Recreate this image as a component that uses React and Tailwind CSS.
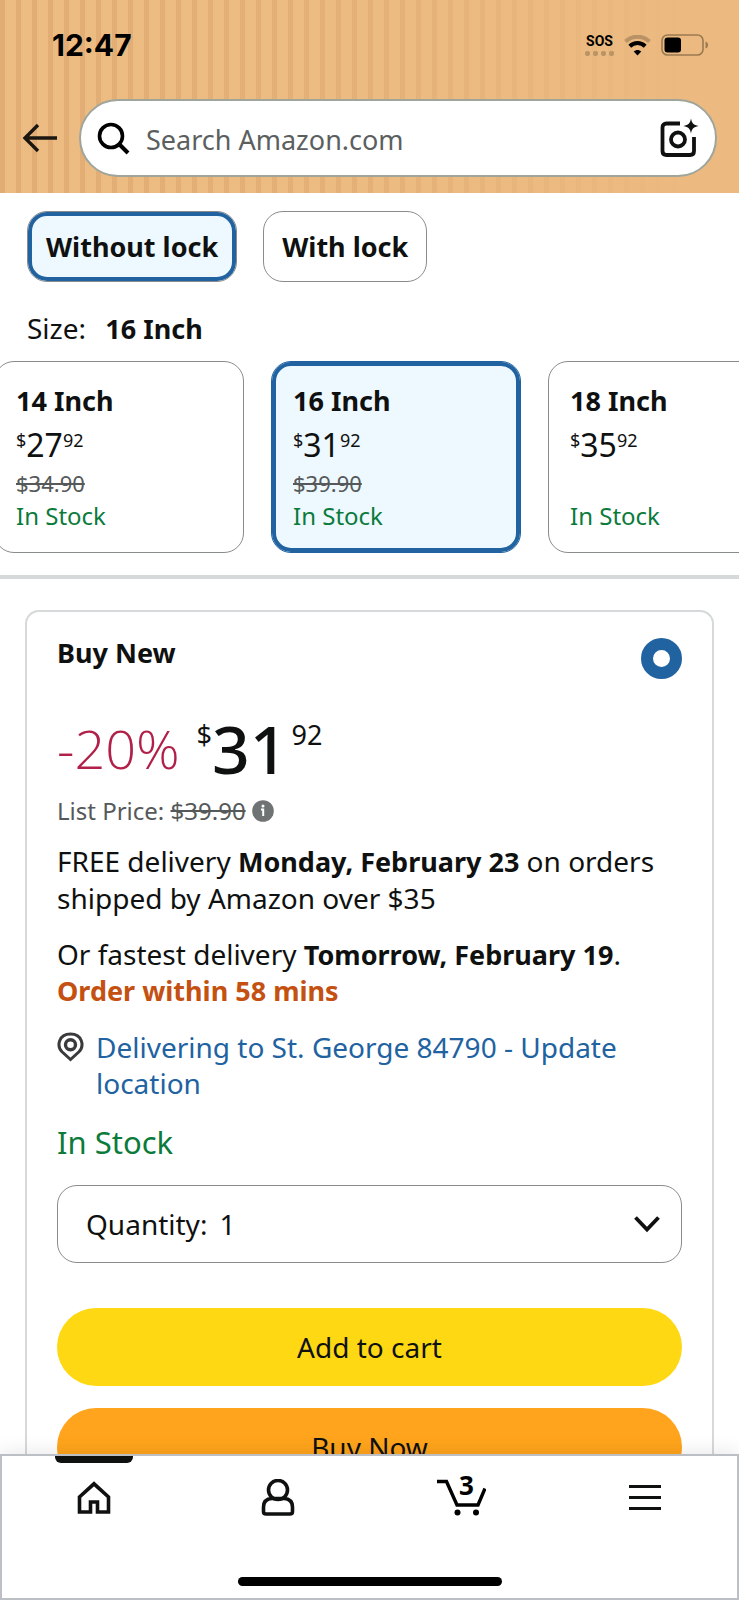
import { useState } from "react";

const SIZES = [
  { label: "14 Inch", whole: "27", cents: "92", list: "$34.90" },
  { label: "16 Inch", whole: "31", cents: "92", list: "$39.90" },
  { label: "18 Inch", whole: "35", cents: "92", list: "" },
];

function StatusBar() {
  return (
    <div className="flex h-[90px] items-center justify-between pr-[30px] pl-[52px]">
      <span className="font-['Inter'] text-[30px] font-bold text-black">12:47</span>
      <div className="flex items-center gap-[10px]">
        <div className="flex flex-col items-center gap-1">
          <span className="font-['Roboto'] text-sm leading-3 font-bold text-black">SOS</span>
          <div className="flex gap-[3px]">
            <i className="size-[5px] rounded-xs bg-[#bb9466]" />
            <i className="size-[5px] rounded-xs bg-[#bb9466]" />
            <i className="size-[5px] rounded-xs bg-[#bb9466]" />
            <i className="size-[5px] rounded-xs bg-[#bb9466]" />
          </div>
        </div>
        <svg width="27" height="21" viewBox="0 0 27 21" fill="none" aria-hidden="true">
          <path d="M1.5 6.5C8.5 0 18.5 0 25.5 6.5" stroke="#b99265" strokeWidth="4" />
          <path d="M5.8 11.2C10.2 7 16.8 7 21.2 11.2" stroke="#000" strokeWidth="4" />
          <path d="M13.5 20.5L9.7 16.6C11.8 14.5 15.2 14.5 17.3 16.6Z" fill="#000" />
        </svg>
        <svg width="48" height="22" viewBox="0 0 48 22" fill="none" aria-hidden="true">
          <rect x="1" y="1" width="41" height="20" rx="5.5" stroke="#9b7a52" strokeWidth="1.6" />
          <rect x="3.5" y="3.5" width="16.5" height="15" rx="3" fill="#000" />
          <path d="M44.5 7.5C48 8.5 48 13.5 44.5 14.5Z" fill="#9b7a52" />
        </svg>
      </div>
    </div>
  );
}

function Header() {
  return (
    <header className="shrink-0 bg-[linear-gradient(to_right,#ecba8033_0%,#ecba8066_50%,#ecba80_95%),repeating-linear-gradient(to_right,#dfaa72_0px,#dfaa72_5px,#ecbc83_5px,#ecbc83_16px)] pb-4">
      <StatusBar />
      <div className="flex items-center gap-[21px] pt-[9px] pr-[22px] pl-[22px]">
        <button type="button" aria-label="Back">
          <svg width="36" height="30" viewBox="0 0 36 30" fill="none" stroke="#1b1710" strokeWidth="3.4">
            <path d="M35 15H3M16 2L3 15L16 28" />
          </svg>
        </button>
        <label className="flex h-[78px] flex-1 items-center rounded-full border-2 border-[#a0a59c] bg-white pr-4 pl-4">
          <svg width="33" height="33" viewBox="0 0 33 33" fill="none" stroke="#000" strokeWidth="3.6" aria-hidden="true">
            <circle cx="14" cy="14" r="11.5" />
            <path d="M22 22L31 31" strokeWidth="4" />
          </svg>
          <input
            type="text"
            aria-label="Search Amazon.com"
            placeholder="Search Amazon.com"
            className="ml-4 min-w-0 flex-1 pt-1 text-[27px] outline-none placeholder:text-[#5c5f60]"
          />
          <button type="button" aria-label="Search with camera">
            <svg width="40" height="40" viewBox="0 0 40 40" fill="none" stroke="#0f1111" strokeWidth="3.8">
              <path d="M21 5.5H7.5Q3.5 5.5 3.5 9.5V33Q3.5 37 7.5 37H31Q35 37 35 33V19" />
              <circle cx="19" cy="21.5" r="7" />
              <path d="M32 .5C33 5.5 34.5 7 39.5 8C34.5 9 33 10.5 32 15.5C31 10.5 29.5 9 24.5 8C29.5 7 31 5.5 32 .5Z" fill="#0f1111" stroke="none" />
            </svg>
          </button>
        </label>
      </div>
    </header>
  );
}

function LockButton({ label, selected, onClick }) {
  return (
    <button
      type="button"
      aria-pressed={selected}
      onClick={onClick}
      className={`h-[71px] rounded-[20px] border px-[18px] pt-[2px] text-[27px] font-bold ${
        selected
          ? "border-[#888c8c] bg-[#edf8ff] inset-ring-4 inset-ring-[#2162a1]"
          : "border-[#888c8c] bg-white"
      }`}
    >
      {label}
    </button>
  );
}

function SizeCard({ size, selected, onClick }) {
  return (
    <button
      type="button"
      aria-pressed={selected}
      onClick={onClick}
      className={`flex h-[192px] w-[250px] shrink-0 flex-col items-start rounded-[20px] border px-[21px] pt-[21px] ${
        selected
          ? "border-[#2162a1] bg-[#edf8ff] inset-ring-4 inset-ring-[#2162a1]"
          : "border-[#888c8c] bg-white"
      }`}
    >
      <span className="text-[27px] leading-9 font-bold">{size.label}</span>
      <span className="mt-[5px] flex items-start">
        <span className="text-lg leading-8">$</span>
        <span className="text-[32px] leading-[42px]">{size.whole}</span>
        <span className="text-lg leading-8">{size.cents}</span>
      </span>
      <s className="h-8 text-[22px] leading-[34px] text-[#565959]">{size.list}</s>
      <span className="text-2xl leading-9 text-[#0b7b3c]">In Stock</span>
    </button>
  );
}

function BuyBox() {
  const [quantity, setQuantity] = useState("1");

  return (
    <section className="mx-[25px] mt-[31px] rounded-t-[14px] border-2 border-b-0 border-[#d5d9d9] px-[30px] pt-[23px]">
      <div className="flex items-start justify-between">
        <label htmlFor="buy-new" className="text-[27px] leading-9 font-bold">
          Buy New
        </label>
        <input
          id="buy-new"
          type="radio"
          name="offer"
          defaultChecked
          className="mt-[3px] size-[41px] appearance-none rounded-full border-[#2162a1] bg-white checked:border-[12px]"
        />
      </div>

      <div className="mt-9 flex items-start">
        <span className="font-['Open_Sans'] text-[54px] leading-[66px] font-light text-[#b12048]">-20%</span>
        <span className="ml-[17px] text-[27px] leading-10">$</span>
        <span className="text-[66px] leading-[66px] font-medium">31</span>
        <span className="ml-1 text-[27px] leading-10">92</span>
      </div>

      <div className="mt-3 flex items-center text-2xl leading-9 text-[#565959]">
        <span>
          List Price: <s>$39.90</s>
        </span>
        <button type="button" aria-label="List price details" className="ml-[6px]">
          <svg width="22" height="22" viewBox="0 0 22 22">
            <circle cx="11" cy="11" r="10.8" fill="#6f7373" />
            <circle cx="11" cy="6" r="1.5" fill="#fff" />
            <path d="M9 9.500H11.2V16" fill="none" stroke="#fff" strokeWidth="2" />
          </svg>
        </button>
      </div>

      <p className="mt-[14px] text-[28px] leading-9">
        FREE delivery <b className="text-[27px]">Monday, February 23</b> on orders shipped by Amazon over $35
      </p>
      <p className="mt-5 text-[28px] leading-9">
        Or fastest delivery <b className="text-[27px]">Tomorrow, February 19</b>.{" "}
        <b className="block text-[27px] text-[#c45012]">Order within 58 mins</b>
      </p>

      <a href="#location" className="mt-5 flex items-start text-[28px] leading-9 text-[#2162a1]">
        <svg className="mt-[3px] mr-3 shrink-0" width="27" height="30" viewBox="0 0 27 30" fill="none" stroke="#3a3b3c">
          <path d="M13.5 27.5L5 19.8C-.5 14 1.5 2 13.5 2S27.5 14 22 19.8Z" strokeWidth="3" />
          <circle cx="13.5" cy="12.8" r="5" strokeWidth="3.4" />
        </svg>
        <span>Delivering to St. George 84790 - Update location</span>
      </a>

      <p className="mt-[21px] text-[31px] leading-10 text-[#0b7b3c]">In Stock</p>

      <div className="mt-[23px] flex h-[78px] items-center rounded-[20px] border border-[#888c8c] px-7 text-[28px]">
        <label htmlFor="quantity">Quantity:</label>
        <select
          id="quantity"
          value={quantity}
          onChange={(e) => setQuantity(e.target.value)}
          className="ml-3 flex-1 appearance-none outline-none"
        >
          <option>1</option>
          <option>2</option>
          <option>3</option>
        </select>
        <svg className="-mr-2" width="28" height="18" viewBox="0 0 28 18" fill="none" stroke="#0f1111" strokeWidth="3.8" aria-hidden="true">
          <path d="M2.5 2.5L14 14.5L25.5 2.5" />
        </svg>
      </div>

      <button type="button" className="mt-[45px] h-[78px] w-full rounded-full bg-[#ffd814] text-[28px]">
        Add to cart
      </button>
      <button type="button" className="mt-[22px] h-[78px] w-full rounded-full bg-[#ffa41c] text-[28px]">
        Buy Now
      </button>
    </section>
  );
}

function BottomNav() {
  return (
    <nav className="relative h-[146px] shrink-0 border-2 border-[#bcc0c4] bg-white shadow-[0_-4px_16px_rgba(0,0,0,0.08)]">
      <div className="grid grid-cols-4">
        <a href="#home" aria-label="Home" className="flex flex-col items-center">
          <span className="h-[7px] w-[78px] rounded-b-md bg-[#0f1111]" />
          <svg className="mt-[18px]" width="34" height="34" viewBox="0 0 34 34" fill="none" stroke="#0f1111" strokeWidth="3.6">
            <path d="M2.5 31V16L17 2.8L31.5 16V31H20.5V21H13.5V31Z" />
          </svg>
        </a>
        <a href="#account" aria-label="Account" className="flex justify-center pt-[23px]">
          <svg width="34" height="37" viewBox="0 0 34 37" fill="none" stroke="#0f1111" strokeWidth="3.6">
            <circle cx="17" cy="11" r="9.5" />
            <path d="M11 19.5Q2.5 20 2.5 28V32.5Q2.5 35 5 35H29Q31.5 35 31.5 32.5V28Q31.5 20 23 19.5Z" />
          </svg>
        </a>
        <a href="#cart" aria-label="Cart, 3 items" className="flex justify-center pt-[19px]">
          <span className="relative">
            <svg width="50" height="42" viewBox="0 0 50 42" fill="none" stroke="#000" strokeWidth="3.4">
              <path d="M1 6.5H10.5L21 30H42L49 13.5" />
              <circle cx="21.5" cy="37.5" r="3" fill="#000" stroke="none" />
              <circle cx="40" cy="37.5" r="3" fill="#000" stroke="none" />
            </svg>
            <span className="absolute inset-x-0 -top-1 pl-[10px] text-center text-[26px] leading-7 font-bold text-black">3</span>
          </span>
        </a>
        <a href="#menu" aria-label="Menu" className="flex justify-center pt-[29px]">
          <svg width="32" height="26" viewBox="0 0 32 26" stroke="#0f1111" strokeWidth="3">
            <path d="M0 1.5H32M0 12.5H32M0 23.5H32" />
          </svg>
        </a>
      </div>
      <div className="absolute bottom-3 left-1/2 h-[9px] w-[264px] -translate-x-1/2 rounded-full bg-black" />
    </nav>
  );
}

export default function App() {
  const [lock, setLock] = useState("Without lock");
  const [size, setSize] = useState("16 Inch");

  return (
    <div className="flex h-screen flex-col overflow-hidden bg-white font-['Noto_Sans',sans-serif] text-[#0f1111]">
      <Header />
      <main className="min-h-0 flex-1 overflow-hidden">
        <div className="flex gap-[26px] px-[27px] pt-[18px]">
          {["Without lock", "With lock"].map((label) => (
            <LockButton key={label} label={label} selected={lock === label} onClick={() => setLock(label)} />
          ))}
        </div>

        <p className="mt-7 px-[27px] text-[28px] leading-9">
          Size: <b className="ml-3 text-[27px]">{size}</b>
        </p>

        {/* Size carousel, scrolled slightly past the first card */}
        <div className="mt-[14px] -ml-[6px] flex gap-[27px] overflow-hidden border-b-4 border-[#d5d9d9] pb-[22px]">
          {SIZES.map((item) => (
            <SizeCard
              key={item.label}
              size={item}
              selected={size === item.label}
              onClick={() => setSize(item.label)}
            />
          ))}
        </div>

        <BuyBox />
      </main>
      <BottomNav />
    </div>
  );
}
